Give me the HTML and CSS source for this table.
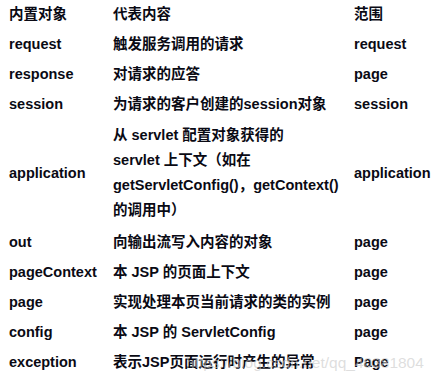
FILE: index.html
```html
<!DOCTYPE html>
<html lang="zh">
<head>
<meta charset="utf-8">
<link rel="stylesheet" href="styles.css">
</head>
<body>
<div class="table">
  <div class="row"><div class="c1">内置对象</div><div class="c2">代表内容</div><div class="c3">范围</div></div>
  <div class="row"><div class="c1">request</div><div class="c2">触发服务调用的请求</div><div class="c3">request</div></div>
  <div class="row"><div class="c1">response</div><div class="c2">对请求的应答</div><div class="c3">page</div></div>
  <div class="row"><div class="c1">session</div><div class="c2">为请求的客户创建的session对象</div><div class="c3">session</div></div>
  <div class="row multi"><div class="c1">application</div><div class="c2">从 servlet 配置对象获得的<br>servlet 上下文（如在<br>getServletConfig()，getContext()<br>的调用中）</div><div class="c3">application</div></div>
  <div class="row"><div class="c1">out</div><div class="c2">向输出流写入内容的对象</div><div class="c3">page</div></div>
  <div class="row"><div class="c1">pageContext</div><div class="c2">本 JSP 的页面上下文</div><div class="c3">page</div></div>
  <div class="row"><div class="c1">page</div><div class="c2">实现处理本页当前请求的类的实例</div><div class="c3">page</div></div>
  <div class="row"><div class="c1">config</div><div class="c2">本 JSP 的 ServletConfig</div><div class="c3">page</div></div>
  <div class="row"><div class="c1">exception</div><div class="c2">表示JSP页面运行时产生的异常</div><div class="c3">Page</div></div>
</div>
<h2 class="next">四个作用域</h2>
<div class="watermark">https://blog.csdn.net/qq_40381804</div>
</body>
</html>
```
FILE: styles.css
```css
html, body {
  margin: 0;
  padding: 0;
  background: #fff;
}
body {
  position: relative;
  width: 439px;
  height: 383px;
  overflow: hidden;
  font-family: "Liberation Sans", "Noto Sans CJK SC", sans-serif;
  font-weight: bold;
  font-size: 14.5px;
  color: #0a0a14;
}
.table {
  display: flex;
  flex-direction: column;
  margin-top: -1px;
}
.row {
  display: grid;
  grid-template-columns: 104px 241px 1fr;
  padding: 4px 0 4px 9px;
  line-height: 22px;
  align-items: center;
}
.row.multi .c2 {
  line-height: 25px;
}
.c1, .c2, .c3 {
  white-space: nowrap;
}
.next {
  margin: 6px 0 0 50px;
  font-size: 19px;
  line-height: 24px;
  letter-spacing: 2px;
  font-weight: bold;
}
.watermark {
  position: absolute;
  left: 186px;
  top: 354px;
  font-family: "Liberation Sans", sans-serif;
  font-weight: normal;
  font-size: 15.5px;
  color: rgba(200, 200, 200, 0.6);
  white-space: nowrap;
}
```
